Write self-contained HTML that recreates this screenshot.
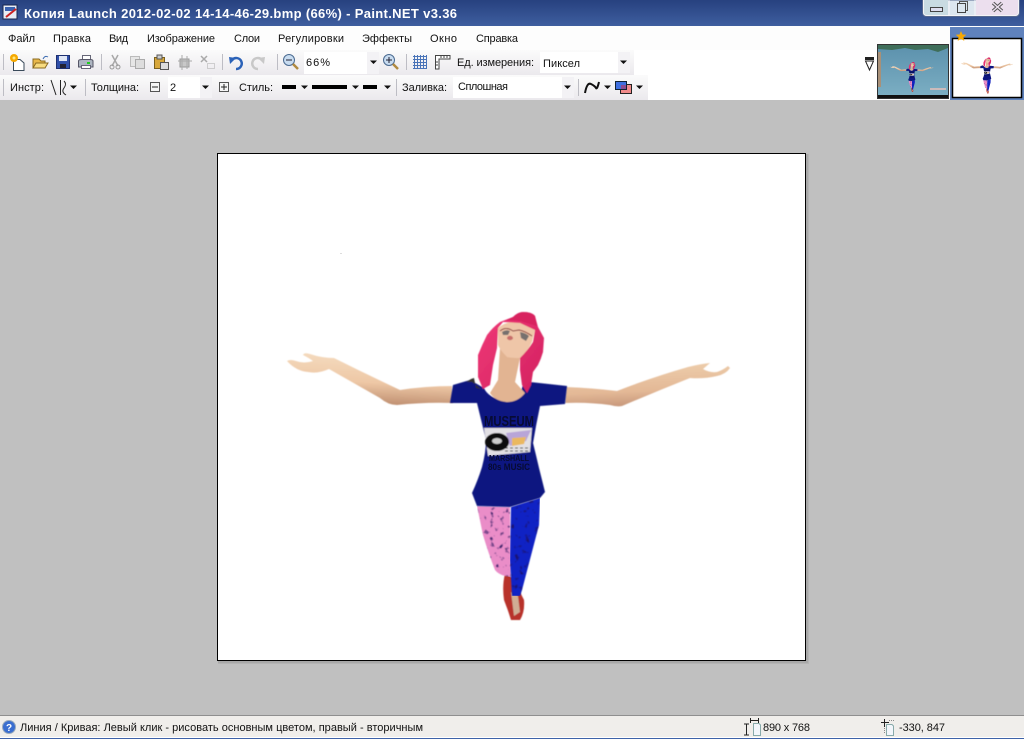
<!DOCTYPE html>
<html><head><meta charset="utf-8"><style>
html,body{margin:0;padding:0;background:#c0c0c0;width:1024px;height:739px;overflow:hidden}
svg{display:block;position:absolute;left:0;top:0}
text{font-family:"Liberation Sans","DejaVu Sans",sans-serif;font-size:11px;fill:#111}
</style></head><body>
<svg width="1024" height="739" viewBox="0 0 1024 739" xmlns="http://www.w3.org/2000/svg">
<defs>
<linearGradient id="tb" x1="0" y1="0" x2="0" y2="1"><stop offset="0" stop-color="#27417f"/><stop offset="1" stop-color="#3e5e9f"/></linearGradient>
<linearGradient id="row" x1="0" y1="0" x2="0" y2="1"><stop offset="0" stop-color="#fbfbfb"/><stop offset="1" stop-color="#ebe9ed"/></linearGradient>
<linearGradient id="arml" x1="0.5" y1="0" x2="0.35" y2="1"><stop offset="0" stop-color="#f5dcc0"/><stop offset="0.55" stop-color="#eec8a6"/><stop offset="1" stop-color="#bb8a6c"/></linearGradient>
<linearGradient id="armr" x1="0.45" y1="0.1" x2="0.6" y2="1"><stop offset="0" stop-color="#eccba9"/><stop offset="0.6" stop-color="#e3b896"/><stop offset="1" stop-color="#c49478"/></linearGradient>
<linearGradient id="hair" x1="0" y1="0" x2="1" y2="1"><stop offset="0" stop-color="#f03a78"/><stop offset="1" stop-color="#d2205f"/></linearGradient>
<linearGradient id="thumbbg" x1="0" y1="0" x2="0" y2="1"><stop offset="0" stop-color="#5b90ac"/><stop offset="1" stop-color="#7db0c4"/></linearGradient>
<filter id="soft" x="-5%" y="-5%" width="110%" height="110%"><feGaussianBlur stdDeviation="0.6"/></filter>
<filter id="lace" x="0" y="0" width="100%" height="100%" color-interpolation-filters="sRGB">
<feTurbulence type="fractalNoise" baseFrequency="0.2" numOctaves="2" seed="4" result="n"/>
<feColorMatrix in="n" type="matrix" values="0 0 0 0 0.12  0 0 0 0 0.06  0 0 0 0 0.35  4 0 0 0 -2.4" result="d"/>
<feComposite in="d" in2="SourceAlpha" operator="in" result="t"/>
<feMerge result="m"><feMergeNode in="SourceGraphic"/><feMergeNode in="t"/></feMerge>
<feGaussianBlur in="m" stdDeviation="0.5"/>
</filter>
<clipPath id="tc"><rect x="878" y="45" width="70" height="53"/></clipPath>
<symbol id="fig" viewBox="0 0 1024 739" overflow="visible">
<g filter="url(#soft)">
<path d="M287 361Q290 359 296 361Q304 364 313 361Q309 358 303 355Q304 352 310 354Q322 358 334 358Q368 375 400 390Q426 386 452 386L453 403Q425 402 397 405Q388 405 380 398L329 369Q318 374 308 372Q296 371 287 361Z" fill="url(#arml)"/>
<path d="M566 387Q592 388 617 391Q650 378 688 367Q700 364 710 363L703 369Q710 373 717 372Q723 370 728 366L730 368Q726 374 717 376Q704 379 690 378Q655 392 622 406Q617 407 610 405Q588 402 565 403Z" fill="url(#armr)"/>
<path d="M505 574L513 578L524 600Q525 612 520 620L511 620Q508 610 504 600Q502 585 505 574Z" fill="#b8302a"/>
<path d="M511 592L518 596L520 612L514 616Z" fill="#d0ae94"/>
</g>
<path d="M477 506L510 507L511 577L505 576Q498 574 495 570Q488 552 483 535Z" fill="#ea8dc8" filter="url(#lace)"/>
<path d="M511 507L540 498L539 525L522 590L520 596L512 596L510 560Z" fill="#1022c4" filter="url(#lace)"/>
<g filter="url(#soft)">
<path d="M450 403L453 385L470 380L484 388Q488 398 507 402Q520 400 523 384L530 382L567 386L565 404L540 406Q536 425 533 443Q536 455 539 468L545 492L540 498L510 507L477 506L472 493Q478 480 482 467Q486 452 486 440L477 403Z" fill="#0b1680"/>
<path d="M484 428L532 428L530 452L488 456Z" fill="#e2e0e4"/>
<path d="M506 433L531 430L526 441L510 446Z" fill="#b8a5d8"/>
<path d="M512 438L526 437L524 444L512 446Z" fill="#eab860"/>
<path d="M505 448H529M505 451H529" stroke="#333" stroke-width="1" stroke-dasharray="3 2"/>
<ellipse cx="497" cy="442" rx="12" ry="9" fill="#080808"/><ellipse cx="497" cy="441" rx="5" ry="3" fill="#ccc"/>
<path d="M481 389L472 382L466 382L463 384L471 379L474 378L476 388Z" fill="#33332f"/>
<path d="M500 348L520 358L515 382L525 393Q518 402 507 402Q495 401 490 393L498 380Z" fill="#e2b492"/>
<path d="M498 328Q505 322 513 322Q525 322 535 330L532 342Q527 352 520 358Q512 358 507 357Q500 350 498 345Z" fill="#efc6a8"/>
<path d="M513 317Q518 312 523 312Q532 312 535 316L538 327L544 338L543 352Q541 359 538 365L533 372L531 385L527 393L522 385L520 370L520 358Q528 350 533 342L535 330L520 323L503 322L498 328L497 348L493 365L490 385L483 389L478 377L478 355Q482 345 487 335Q493 327 500 322Z" fill="url(#hair)"/>
<path d="M513 317Q518 312 523 312Q532 312 535 316L537 326L520 321L506 320Z" fill="#d8205f"/>
<path d="M502 332Q506 329 510 331L508 335L503 335ZM520 332Q526 333 529 336L526 341L521 338Z" fill="#76706e"/>
<path d="M500 331Q506 326 513 331L519 330Q525 331 532 336" stroke="#8a3a3a" stroke-width="1" fill="none"/>
<ellipse cx="510" cy="338" rx="3" ry="2.200" fill="#c96d6b"/>
</g>
<text x="484" y="426" font-weight="bold" style="font-size:15px;fill:#070b33" textLength="50" lengthAdjust="spacingAndGlyphs">MUSEUM</text>
<text x="489" y="461" font-weight="bold" style="font-size:8px;fill:#070b33" textLength="40" lengthAdjust="spacingAndGlyphs">MARSHALL</text>
<text x="488" y="470" font-weight="bold" style="font-size:9px;fill:#070b33" textLength="42" lengthAdjust="spacingAndGlyphs">80s MUSIC</text>
</symbol>
</defs>

<rect width="1024" height="739" fill="#c0c0c0"/>
<rect width="1024" height="26" fill="url(#tb)"/>
<rect x="0" y="26" width="1024" height="74" fill="#fff"/>
<rect x="0" y="26" width="950" height="24" fill="#fdfdfd"/>

<!-- title -->
<rect x="3" y="5" width="14" height="14" fill="#e8edf5" stroke="#18264f"/><rect x="5" y="7" width="10" height="4" fill="#3a62b0"/><path d="M6 17L16 9" stroke="#c22" stroke-width="2"/>
<text x="24" y="18" font-weight="bold" style="font-size:13px;fill:#fff" textLength="433" lengthAdjust="spacing">Копия Launch 2012-02-02 14-14-46-29.bmp (66%) - Paint.NET v3.36</text>

<!-- window buttons -->
<path d="M922.500 0V12Q922.500 16.500 927 16.500H1015Q1019.500 16.500 1019.500 12V0Z" fill="#dce6ef" stroke="#56688f"/>
<path d="M923.500 0V12Q923.500 15.500 927 15.500H1015Q1018.500 15.500 1018.500 12V0" fill="none" stroke="#f4f4f6"/>
<path d="M924 0H948V15H927Q924 15 924 12Z" fill="#c9dbe2"/>
<path d="M976 0H1018V12Q1018 15 1015 15H976Z" fill="#ecdfee"/>
<path d="M949 0V16M975 0V16" stroke="#f7f5fa"/>
<rect x="930.500" y="7.500" width="12" height="4" fill="#dde" stroke="#444"/>
<rect x="959.500" y="1.500" width="8" height="9" fill="none" stroke="#555"/><rect x="957.500" y="3.500" width="8" height="9" fill="#dce6ef" stroke="#444"/>
<path d="M993 3L1002 11M1002 3L993 11" stroke="#555" stroke-width="3.500"/><path d="M993 3L1002 11M1002 3L993 11" stroke="#ecdfee" stroke-width="1.500"/>

<!-- menu -->
<g>
<text x="8" y="42" textLength="27">Файл</text>
<text x="53" y="42" textLength="38">Правка</text>
<text x="109" y="42" textLength="19">Вид</text>
<text x="147" y="42" textLength="68">Изображение</text>
<text x="234" y="42" textLength="26">Слои</text>
<text x="278" y="42" textLength="66">Регулировки</text>
<text x="362" y="42" textLength="50">Эффекты</text>
<text x="430" y="42" textLength="27">Окно</text>
<text x="476" y="42" textLength="42">Справка</text>
</g>

<!-- toolbar backgrounds -->
<rect x="0" y="50" width="634" height="25" fill="url(#row)"/>
<rect x="0" y="75" width="648" height="25" fill="url(#row)"/>
<rect x="304" y="52" width="75" height="22" fill="#fff"/><rect x="367" y="52" width="12" height="22" fill="#f3f2f5"/>
<rect x="540" y="52" width="90" height="21" fill="#fff"/><rect x="618" y="52" width="12" height="21" fill="#f3f2f5"/>
<rect x="168" y="77" width="44" height="21" fill="#fff"/><rect x="200" y="77" width="12" height="21" fill="#f3f2f5"/>
<rect x="453" y="77" width="121" height="21" fill="#fff"/><rect x="562" y="77" width="12" height="21" fill="#f3f2f5"/>

<!-- separators -->
<path d="M3.500 54V70M101.500 54V70M222.500 54V70M277.500 54V70M406.500 54V70M3.500 79V96M85.500 79V96M396.500 79V96M578.500 79V96" stroke="#bdbdc4"/>

<!-- row1 icons -->
<path d="M13.500 59.500H20L24 63V70.500H13.500Z" fill="#fff" stroke="#3a4a5a"/><circle cx="14" cy="58" r="4" fill="#f5a800"/><circle cx="14" cy="58" r="1.500" fill="#ffe680"/>
<path d="M33 68V59H39L41 61H45V68Z" fill="#e8b84a" stroke="#8a6a20"/><path d="M33 68L36 63H48L45 68Z" fill="#f8dc80" stroke="#8a6a20"/><path d="M43 59Q45 55 48 57" stroke="#3a6ab0" fill="none"/>
<rect x="56.500" y="55.500" width="13" height="13" fill="#2f4fa8" stroke="#1d2f70"/><rect x="59" y="56" width="8" height="5" fill="#dfe6f5"/><rect x="60" y="64" width="6" height="4" fill="#223"/>
<path d="M82.500 55.500H90.500V60H82.500Z" fill="#fff" stroke="#667"/><path d="M78.500 61Q78.500 59.500 82 59.500H90Q93 59.500 93 61V67H78.500Z" fill="#aeb6c2" stroke="#556"/><rect x="81.500" y="65.500" width="9" height="3" fill="#fff" stroke="#667"/><rect x="87" y="62" width="3" height="2" fill="#2c2"/>
<path d="M112 55L118 66M118 55L112 66" stroke="#a8a8a8" stroke-width="1.500"/><circle cx="112" cy="67" r="2" fill="none" stroke="#999"/><circle cx="118" cy="67" r="2" fill="none" stroke="#999"/>
<rect x="130.500" y="56.500" width="9" height="10" fill="#e6e6e6" stroke="#bbb"/><rect x="135.500" y="59.500" width="9" height="9" fill="#ddd" stroke="#aaa"/>
<rect x="154.500" y="57.500" width="10" height="11" fill="#d8a83c" stroke="#7a6020"/><rect x="157" y="55" width="5" height="4" fill="#ccc" stroke="#555"/><rect x="160.500" y="62.500" width="8" height="7" fill="#ddd" stroke="#555"/>
<rect x="180" y="59" width="9" height="8" fill="#c8c8c8" stroke="#999"/><path d="M182 55V70M178 61H192M187 56V69" stroke="#aaa"/>
<path d="M201 56L207 62M207 56L201 62" stroke="#aaa" stroke-width="1.500"/><rect x="207.500" y="63.500" width="7" height="5" fill="none" stroke="#aaa" stroke-dasharray="1 1"/>
<path d="M232 60A5.500 5.500 0 1 1 236 69" fill="none" stroke="#2b62b8" stroke-width="2.500"/><path d="M229 57L236 58L230 64Z" fill="#2b62b8"/>
<path d="M262 60A5.500 5.500 0 1 0 258 69" fill="none" stroke="#c8c8c8" stroke-width="2.500"/><path d="M265 57L258 58L264 64Z" fill="#c8c8c8"/>
<circle cx="289" cy="60" r="5.500" fill="#c8dcf0" stroke="#4a6a90"/><path d="M293 64L298 69" stroke="#b08a40" stroke-width="2.500"/><path d="M286 60H292" stroke="#223"/>
<circle cx="389" cy="60" r="5.500" fill="#c8dcf0" stroke="#4a6a90"/><path d="M393 64L398 69" stroke="#b08a40" stroke-width="2.500"/><path d="M386 60H392M389 57V63" stroke="#223"/>
<path d="M413 56.500H427M413 59.500H427M413 62.500H427M413 65.500H427M413 68.500H427M414.500 55V69M417.500 55V69M420.500 55V69M423.500 55V69M426.500 55V69" stroke="#4a74b8" stroke-width="1"/>
<path d="M435.500 55.500H450V59H439V69H435.500Z" fill="#fff" stroke="#444"/><path d="M441 56V58M444 56V58M447 56V58M436 62H438M436 65H438" stroke="#444"/>
<text x="306" y="66" textLength="24">66%</text>
<text x="457" y="66" textLength="77">Ед. измерения:</text>
<text x="543" y="67" textLength="37">Пиксел</text>

<!-- row2 -->
<text x="10" y="91" textLength="34">Инстр:</text>
<path d="M51 80L56 95M60.500 80V95" stroke="#222"/><path d="M64 81Q67 84 64 88T66 95" stroke="#222" fill="none"/>
<text x="91" y="91" textLength="48">Толщина:</text>
<rect x="150.500" y="82.500" width="9" height="9" fill="#f5f5f5" stroke="#555"/><path d="M152 87H158" stroke="#222"/>
<text x="170" y="91">2</text>
<rect x="219.500" y="82.500" width="9" height="9" fill="#f5f5f5" stroke="#555"/><path d="M221 87H227M224 84V90" stroke="#222"/>
<text x="239" y="91" textLength="34">Стиль:</text>
<rect x="282" y="85" width="14" height="4" fill="#000"/><rect x="312" y="85" width="35" height="4" fill="#000"/><rect x="363" y="85" width="14" height="4" fill="#000"/>
<text x="402" y="91" textLength="45">Заливка:</text>
<text x="458" y="90" textLength="50">Сплошная</text>
<path d="M585 93Q587 82 591 84T596 88T599 82" fill="none" stroke="#111" stroke-width="2"/>
<rect x="620.500" y="84.500" width="11" height="9" fill="#f08a8a" stroke="#222"/><rect x="615.500" y="81.500" width="11" height="8" fill="#3f6fe0" stroke="#123"/><rect x="621" y="85" width="5" height="4" fill="#8a4a90"/>

<!-- dropdown arrows -->
<path d="M370 60.500h7l-3.500 3.500zM620 60.500h7l-3.500 3.500zM70 85.500h7l-3.500 3.500zM202 85.500h7l-3.500 3.500zM301 85.500h7l-3.500 3.500zM352 85.500h7l-3.500 3.500zM384 85.500h7l-3.500 3.500zM564 85.500h7l-3.500 3.500zM604 85.500h7l-3.500 3.500zM636 85.500h7l-3.500 3.500z" fill="#111"/>

<!-- thumbnails -->
<path d="M865 57h9v3h-9z" fill="#222"/><path d="M865.500 61L869.500 70L873.500 61Z" fill="#fff" stroke="#222"/>
<rect x="950" y="27" width="74" height="73" fill="#5f82bd"/>
<rect x="877.500" y="44.500" width="71" height="54" fill="url(#thumbbg)" stroke="#333"/>
<g clip-path="url(#tc)">
<path d="M878 45H948V48L938 52L928 49L915 50L905 48L892 50L878 49Z" fill="#3f6e5a"/>
<rect x="878" y="95" width="70" height="3" fill="#111"/>
<rect x="878" y="52" width="3" height="35" fill="#a89078"/>
<rect x="930" y="88" width="16" height="2" fill="#cbb"/>
<use href="#fig" x="0" y="0" width="1024" height="739" transform="translate(862.500,31.800) scale(0.097)"/>
</g>
<rect x="952.500" y="38.500" width="69" height="59" fill="#fff" stroke="#000" stroke-width="1.500"/>
<use href="#fig" x="0" y="0" width="1024" height="739" transform="translate(927.500,21) scale(0.117)"/>
<path d="M961 31l1.500 3.500l3.800.3l-2.900 2.400l.9 3.700l-3.300-2l-3.300 2l.9-3.700l-2.900-2.400l3.800-.3z" fill="#f8a800"/>

<!-- canvas -->
<rect x="218" y="154" width="591" height="510" fill="#b4b4b4"/>
<rect x="218" y="154" width="590" height="509" fill="#a8a8a8"/>
<rect x="217.500" y="153.500" width="588" height="507" fill="#fff" stroke="#000"/>
<rect x="340" y="253" width="2" height="1" fill="#ddd"/>
<use href="#fig" x="0" y="0" width="1024" height="739"/>

<!-- status -->
<rect x="0" y="715" width="1024" height="1" fill="#8f8f8f"/>
<rect x="0" y="716" width="1024" height="21" fill="#f0eeeb"/>
<rect x="0" y="737" width="1024" height="1" fill="#fff"/>
<rect x="0" y="738" width="1024" height="1" fill="#3e62a8"/>
<circle cx="9" cy="727" r="6.500" fill="#3a6ed0" stroke="#9ab"/>
<text x="6" y="731" font-weight="bold" style="font-size:10px;fill:#fff">?</text>
<text x="20" y="731" textLength="403">Линия / Кривая: Левый клик - рисовать основным цветом, правый - вторичным</text>
<path d="M746.500 724V735M744 724H749M744 735H749M750 720.500H759M750.500 718V723M758.500 718V723" stroke="#222"/>
<path d="M753.500 723.500H759L760.500 725V735.500H753.500Z" fill="#f2f6fb" stroke="#8aa"/>
<text x="763" y="731" textLength="47">890 x 768</text>
<path d="M884.500 719V727M881 722.500H889" stroke="#222"/>
<path d="M884.500 728V734M889 720.500H894" stroke="#888" stroke-dasharray="1 1"/>
<path d="M886.500 724.500H892L893.500 726V735.500H886.500Z" fill="#f2f6fb" stroke="#8aa"/>
<text x="899" y="731" textLength="46">-330, 847</text>
</svg>
</body></html>
